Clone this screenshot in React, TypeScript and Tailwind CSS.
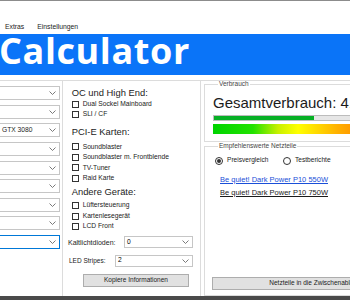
import { ReactNode } from 'react';

function Chevron() {
  return (
    <svg width="7" height="4" viewBox="0 0 7 4" className="shrink-0">
      <polyline points="0.5,0.5 3.5,3.5 6.5,0.5" fill="none" stroke="#6b6b6b" strokeWidth="0.9" />
    </svg>
  );
}

function SideCombo({ text, focused }: { text?: string; focused?: boolean }) {
  return (
    <div
      className={`h-[14px] w-full flex items-center justify-between border-y border-r bg-white pl-[2px] pr-[3px] ${
        focused ? 'border-[#0078d7]' : 'border-[#c6c6c6]'
      }`}
    >
      <span className="text-[6.7px] leading-none text-[#1b1b1b]">{text}</span>
      <Chevron />
    </div>
  );
}

function Check({ label }: { label: string }) {
  return (
    <div className="h-[10.5px] flex items-center">
      <span className="w-[7px] h-[7px] border border-[#333] bg-white shrink-0" />
      <span className="ml-[4px] text-[6.7px] leading-none text-[#1b1b1b] whitespace-nowrap">{label}</span>
    </div>
  );
}

function Heading({ children }: { children: ReactNode }) {
  return <div className="h-[12px] flex items-center text-[9.4px] leading-none text-[#222]">{children}</div>;
}

function Radio({ label, checked }: { label: string; checked?: boolean }) {
  return (
    <div className="flex items-center">
      <span className="w-[8px] h-[8px] rounded-full border border-[#333] bg-white flex items-center justify-center shrink-0">
        {checked && <span className="w-[4px] h-[4px] rounded-full bg-[#333]" />}
      </span>
      <span className="ml-[4px] text-[6.6px] leading-none text-[#1b1b1b]">{label}</span>
    </div>
  );
}

export default function App() {
  const sideCombos = ['', '', 'GTX 3080', '', '', '', '', '', ''];

  return (
    <div className="w-[350px] h-[300px] overflow-hidden bg-white font-['Liberation_Sans',Arial,sans-serif] flex flex-col">
      <div className="h-px bg-[#8c8c8c] shrink-0" />

      {/* menu */}
      <div className="h-[33px] shrink-0 pt-[19px]">
        <div className="h-[14px] flex items-center text-[6.8px] leading-none text-[#1b1b1b]">
          <span className="ml-[5px]">Extras</span>
          <span className="ml-[13px]">Einstellungen</span>
        </div>
      </div>

      {/* banner */}
      <div className="h-[41px] shrink-0 bg-[#0a74f8]">
        <div className="leading-[34px] text-[36px] font-bold tracking-[0.6px] text-white font-['Open_Sans',sans-serif] -ml-[1px]">
          Calculator
        </div>
      </div>

      <div className="mt-[5px] h-[216px] shrink-0 border-t border-[#dcdcdc] flex">
        {/* left combos */}
        <div className="w-[62px] shrink-0 pr-[2px] pt-[5.3px] flex flex-col gap-[4.6px]">
          {sideCombos.map((c, i) => (
            <SideCombo key={i} text={c} focused={i === sideCombos.length - 1} />
          ))}
        </div>

        {/* middle panel */}
        <div className="w-[139px] shrink-0 border-x border-[#dcdcdc] pt-[6px] pl-[8.7px] flex flex-col">
          <Heading>OC und High End:</Heading>
          <Check label="Dual Sockel Mainboard" />
          <Check label="SLI / CF" />
          <div className="mt-[6px]">
            <Heading>PCI-E Karten:</Heading>
          </div>
          <div className="mt-[3.7px]">
            <Check label="Soundblaster" />
            <Check label="Soundblaster m. Frontblende" />
            <Check label="TV-Tuner" />
            <Check label="Raid Karte" />
          </div>
          <div className="mt-[2px]">
            <Heading>Andere Geräte:</Heading>
          </div>
          <div className="mt-[2.6px]">
            <Check label="Lüftersteuerung" />
            <Check label="Kartenlesegerät" />
            <Check label="LCD Front" />
          </div>
          <div className="mt-[4.5px] -ml-[3.7px] flex items-center h-[12px]">
            <span className="w-[56px] text-[7px] leading-none text-[#1b1b1b]">Kaltlichtdioden:</span>
            <div className="w-[69px] h-[12px] border border-[#c6c6c6] bg-white flex items-center justify-between pl-[2px] pr-[3px]">
              <span className="text-[6.7px] leading-none">0</span>
              <Chevron />
            </div>
          </div>
          <div className="mt-[6.5px] -ml-[2.7px] flex items-center h-[12px]">
            <span className="w-[46px] text-[6.5px] leading-none text-[#1b1b1b]">LED Stripes:</span>
            <div className="w-[78px] h-[12px] border border-[#c6c6c6] bg-white flex items-center justify-between pl-[2px] pr-[3px]">
              <span className="text-[6.7px] leading-none">2</span>
              <Chevron />
            </div>
          </div>
          <button className="mt-[7px] ml-[11.3px] w-[106px] h-[13px] bg-[#e1e1e1] border border-[#adadad] text-[6.5px] leading-none text-[#1b1b1b]">
            Kopiere Informationen
          </button>
        </div>

        {/* right panel */}
        <div className="w-[240px] shrink-0">
          <fieldset className="ml-[3px] w-[230px] border border-[#dcdcdc] px-[8px] pb-[7px]">
            <legend className="ml-[5px] px-[1px] text-[6.5px] leading-none text-[#444]">Verbrauch</legend>
            <div className="mt-[7.5px] text-[15px] leading-[15px] text-[#1b1b1b] whitespace-nowrap">
              Gesamtverbrauch: 410 W
            </div>
            <div className="mt-[5px] h-[6px] w-[200px] border border-[#bcbcbc] bg-[#e6e6e6]">
              <div className="h-full w-[100px] bg-[#06b025]" />
            </div>
            <div className="mt-[3px] h-[10px] w-[200px] bg-[linear-gradient(to_right,#00d400_0px,#22e200_40px,#c8f000_65px,#ffff00_85px,#ffb000_125px,#ff8a00_150px,#ff3c00_200px)]" />
          </fieldset>

          <fieldset className="mt-px ml-[3px] w-[230px] border border-[#dcdcdc] px-[8px] pb-[3px]">
            <legend className="ml-[5px] px-[1px] text-[6.5px] leading-none text-[#444]">Empfehlenswerte Netzteile</legend>
            <div className="mt-[7px] ml-[2px] h-[8px] flex items-center">
              <div className="w-[68px]">
                <Radio label="Preisvergleich" checked />
              </div>
              <Radio label="Testberichte" />
            </div>
            <div className="mt-[8px] ml-[7px] flex flex-col">
              <a className="h-[13.5px] flex items-center text-[7.5px] leading-none text-[#1a4fd8] underline">
                Be quiet! Dark Power P10 550W
              </a>
              <a className="h-[13.5px] flex items-center text-[7.5px] leading-none text-[#1b1b1b] underline">
                Be quiet! Dark Power P10 750W
              </a>
            </div>
            <button className="mt-[77px] -ml-px w-[206px] h-[13px] bg-[#e1e1e1] border border-[#adadad] text-[6.5px] leading-none text-[#1b1b1b]">
              Netzteile in die Zwischenablage
            </button>
          </fieldset>
        </div>
      </div>

      <div className="h-[4px] shrink-0 bg-[#4a4a4a]" />
    </div>
  );
}
